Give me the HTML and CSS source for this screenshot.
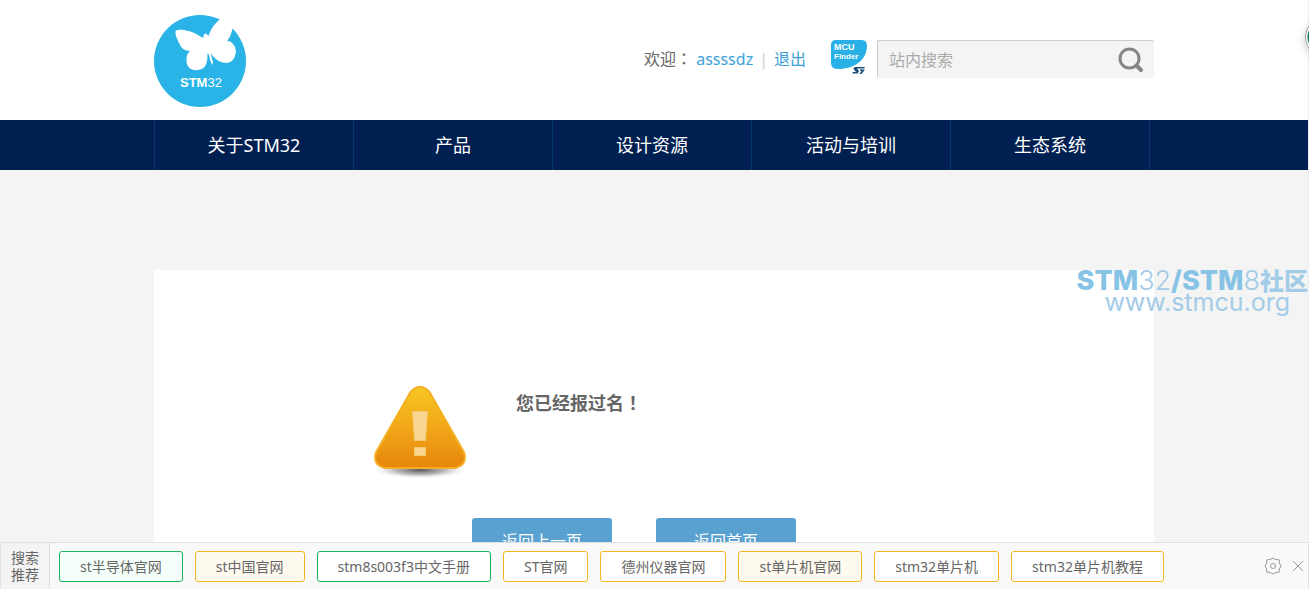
FILE: index.html
```html
<!DOCTYPE html>
<html lang="zh-CN">
<head>
<meta charset="utf-8">
<meta name="viewport" content="width=device-width, initial-scale=1">
<title>STM32/STM8社区</title>
<link rel="stylesheet" href="styles.css">
</head>
<body>
<header class="wrap header">
  <a class="logo" href="#" aria-label="STM32">
    <svg width="92" height="92" viewBox="14 15 92 92">
      <circle cx="60" cy="61" r="46" fill="#29b3e6"/>
      <path fill="#fff" d="M35.500 31C39 28 52 31 58 35Q61 37 63.500 38Q63 34 65.500 33.500Q67.500 34 68.500 36Q71 28 76 23Q79 20 84 15L98 23L92.500 29Q91 36 87 41.500Q90 40 93 44Q96 47 96 51Q95 62 87 63Q78 63 72.500 55.500L72 58Q73.500 62 72.500 65Q70 62 69 55L67.500 53Q68 66 62 69Q57 71 52 69.500Q46 67 46.500 59Q46 55 50 51Q42 51 39 43Q36 37 35.500 34Z"/>
      <path fill="none" stroke="#29b3e6" d="M71.500 54Q72 58 74 62M68.500 56Q69 61 71 65"/>
      <text class="logo-text" x="40" y="87"><tspan class="logo-strong">STM</tspan>32</text>
    </svg>
  </a>
  <div class="tools">
    <p class="welcome">欢迎<span class="mid" lang="zh-TW">：</span> <a href="#">assssdz</a><span class="bar">|</span><a href="#">退出</a></p>
    <a class="finder" href="#" aria-label="MCU Finder">
      <svg width="38" height="36" viewBox="0 0 38 36">
        <path fill="#29b0e6" d="M6 0H32Q37 0 37 6C37 20 24 29 8 29Q1 29 1 23V5Q1 0 6 0Z"/>
        <text class="finder-text finder-top" x="4" y="10">MCU</text>
        <text class="finder-text" x="4" y="19">Finder</text>
        <path fill="#174e7c" d="M25 27H35L34 28.500H27L29 31L27.500 33.500H22L23 32H26L23.500 29Q23.500 27.500 25 27ZM30 29.500H35L31.500 34H29.500L31.500 31H30Z"/>
      </svg>
    </a>
    <form class="search">
      <input class="search-input" type="text" placeholder="站内搜索" aria-label="站内搜索">
      <button class="search-button" type="button" aria-label="搜索">
        <svg width="26" height="26" viewBox="0 0 26 26" fill="none" stroke="#858585"><circle cx="11.500" cy="11.500" r="9.500" stroke-width="3"/><path d="M18.500 18.500L23 23" stroke-width="4" stroke-linecap="round"/></svg>
      </button>
    </form>
  </div>
</header>
<nav class="nav">
  <div class="wrap nav-list">
    <a href="#">关于STM32</a><a href="#">产品</a><a href="#">设计资源</a><a href="#">活动与培训</a><a href="#">生态系统</a>
  </div>
</nav>
<main class="wrap panel">
  <div class="message">
    <svg class="warning" width="98" height="96" viewBox="0 0 98 96">
      <defs>
        <linearGradient id="amber" x1="0" y1="0" x2="0" y2="1"><stop offset="0" stop-color="#f8c624"/><stop offset="1" stop-color="#e8870d"/></linearGradient>
        <radialGradient id="shade"><stop offset="0" stop-color="#555"/><stop offset=".5" stop-color="#999" stop-opacity=".7"/><stop offset="1" stop-color="#fff" stop-opacity="0"/></radialGradient>
      </defs>
      <ellipse cx="49" cy="84" rx="49" ry="9" fill="url(#shade)"/>
      <path fill="#f4ae20" d="M39 5Q49 -5 59 5L94 66Q98 80 84 83H14Q0 80 4 66Z"/>
      <path fill="url(#amber)" d="M40 7Q49 -3 58 7L92 67Q96 78 84 81H14Q2 78 6 67Z"/>
      <path fill="#f9d791" stroke="#f6cb70" d="M41.500 25.500H56.500L54.500 54.500H43.500ZM43.500 61.500H54.500V69.500H43.500Z"/>
    </svg>
    <h1>您已经报过名<span class="mid" lang="zh-TW">！</span></h1>
  </div>
  <div class="actions"><button type="button">返回上一页</button><button type="button">返回首页</button></div>
</main>
<aside class="watermark">
  <div class="mark-title"><b>STM</b>32<b>/STM</b>8<b class="mark-cjk">社区</b></div>
  <div class="mark-url">www.stmcu.org</div>
</aside>
<div class="edge-badge"></div>
<footer class="suggest">
  <div class="suggest-label">搜索<br>推荐</div>
  <div class="chips">
    <a class="green tint" href="#">st半导体官网</a>
    <a class="tint" href="#">st中国官网</a>
    <a class="green" href="#">stm8s003f3中文手册</a>
    <a href="#">ST官网</a>
    <a href="#">德州仪器官网</a>
    <a class="tint" href="#">st单片机官网</a>
    <a href="#">stm32单片机</a>
    <a href="#">stm32单片机教程</a>
  </div>
  <div class="controls">
    <button type="button" aria-label="设置"><svg width="18" height="18" viewBox="0 0 18 18" fill="none" stroke="#999"><path d="M7 2Q9 0 11 2Q12 3.500 13 2.500Q16 2 15.500 5Q14.500 6 16 7Q18 9 16 11Q14.500 12 15.500 13Q16 16 13 15.500Q12 14.500 11 16Q9 18 7 16Q6 14.500 5 15.500Q2 16 2.500 13Q3.500 12 2 11Q0 9 2 7Q3.500 6 2.500 5Q2 2 5 2.500Q6 3.500 7 2Z"/><circle cx="9" cy="9" r="2.500"/></svg></button>
    <button type="button" aria-label="关闭"><svg width="12" height="12" viewBox="0 0 12 12" fill="none" stroke="#999"><path d="M1 1L11 11M11 1L1 11"/></svg></button>
  </div>
</footer>
</body>
</html>
```

FILE: styles.css
```css
* { box-sizing: border-box; }
body {
  margin: 0;
  min-height: 100vh;
  display: flex;
  flex-direction: column;
  position: relative;
  overflow-x: hidden;
  background: #f4f4f4;
  border-right: 1px solid #eee;
  color: #666;
  font: 16px/24px "Noto Sans", "Noto Sans CJK SC", sans-serif;
}
a { color: #3b9fd8; text-decoration: none; }
button { border: 0; padding: 0; background: none; font: inherit; cursor: pointer; }
svg { display: block; }
.wrap { width: 100%; max-width: 1000px; margin: 0 auto; }
.mid { font-family: "Noto Sans CJK TC", sans-serif; line-height: 1; }
.header {
  display: flex;
  justify-content: space-between;
  align-items: flex-start;
  padding: 15px 0 13px;
  background: #fff;
  box-shadow: 0 0 0 100vmax #fff;
  clip-path: inset(0 -100vmax);
}
.logo-text { font: 13px "Liberation Sans Narrow", "Liberation Sans", sans-serif; fill: #fff; }
.logo-strong { font-weight: 700; }
.tools { display: flex; align-items: center; padding-top: 25px; }
.welcome { margin: 0 24px 0 0; }
.bar { margin: 0 6px; color: #ccc; }
.finder { margin: 0 9px 2px 0; }
.finder-text { font: bold 8px "Liberation Sans", sans-serif; fill: #fff; }
.finder-top { font-size: 9px; }
.search {
  display: flex;
  align-items: center;
  width: 277px;
  height: 38px;
  padding: 0 10px 0 11px;
  background: #f4f4f4;
  border-top: 1px solid #ccc;
  border-left: 1px solid #ccc;
  border-radius: 2px;
}
.search-input { flex: 1; min-width: 0; padding: 0; border: 0; outline: 0; background: none; font: inherit; color: #666; }
.search-input::placeholder { color: #aaa; opacity: 1; }
.nav { background: #002052; }
.nav-list { display: flex; border-left: 1px solid #063a6b; }
.nav-list a {
  flex: 1;
  max-width: 199px;
  border-right: 1px solid #063a6b;
  color: #fff;
  font-size: 18px;
  line-height: 50px;
  text-align: center;
}
.panel { flex: 1; margin-top: 100px; padding: 116px 0 25px; background: #fff; }
.message { display: flex; align-items: flex-start; gap: 47px; padding-left: 217px; }
.message h1 { margin: 5px 0 0; font-size: 18px; line-height: 24px; }
.actions { display: flex; gap: 44px; margin-top: 36px; padding-left: 318px; }
.actions button { width: 140px; height: 46px; border-radius: 3px; background: #59a1d0; color: #fff; }
.watermark {
  position: absolute;
  top: 269px;
  right: 0;
  color: #a3cce8;
  font-family: Inter, "Noto Sans CJK SC", sans-serif;
  font-weight: 300;
  white-space: nowrap;
}
.mark-title { font-size: 27px; line-height: 24px; }
.mark-title b { color: #86c3e4; font-weight: 800; }
.mark-title .mark-cjk { color: #a3cce8; font-size: 24px; font-weight: 900; }
.mark-url { padding-right: 18px; font-size: 25px; font-weight: 400; line-height: 16px; text-align: right; }
.edge-badge {
  position: fixed;
  top: 18px;
  right: -34px;
  width: 38px;
  height: 38px;
  border: 1px solid #999;
  border-radius: 50%;
  background: radial-gradient(circle, #0e7a5c 0 16px, #fff 17px);
  box-shadow: 0 3px 8px #9998;
}
.suggest {
  position: fixed;
  bottom: 0;
  left: 0;
  right: 0;
  display: flex;
  align-items: stretch;
  height: 47px;
  background: #f9f9f9;
  border: 1px solid #e0e0e0;
  border-bottom: 0;
  font-size: 14px;
}
.suggest-label { width: 49px; padding-top: 6px; background: #f4f4f4; border-right: 1px solid #e0e0e0; line-height: 17px; text-align: center; }
.chips { flex: 1; display: flex; gap: 12px; padding: 8px 0 0 9px; overflow: hidden; }
.chips a { height: 31px; padding: 0 20px; border: 1px solid #f7b51e; border-radius: 3px; background: #fff; color: #666; line-height: 29px; white-space: nowrap; }
.chips .tint { background: #fffaf0; }
.chips .green { border-color: #1cb35b; }
.chips .green.tint { background: #f5fff9; }
.controls { display: flex; align-items: center; gap: 10px; padding-right: 4px; }
```
